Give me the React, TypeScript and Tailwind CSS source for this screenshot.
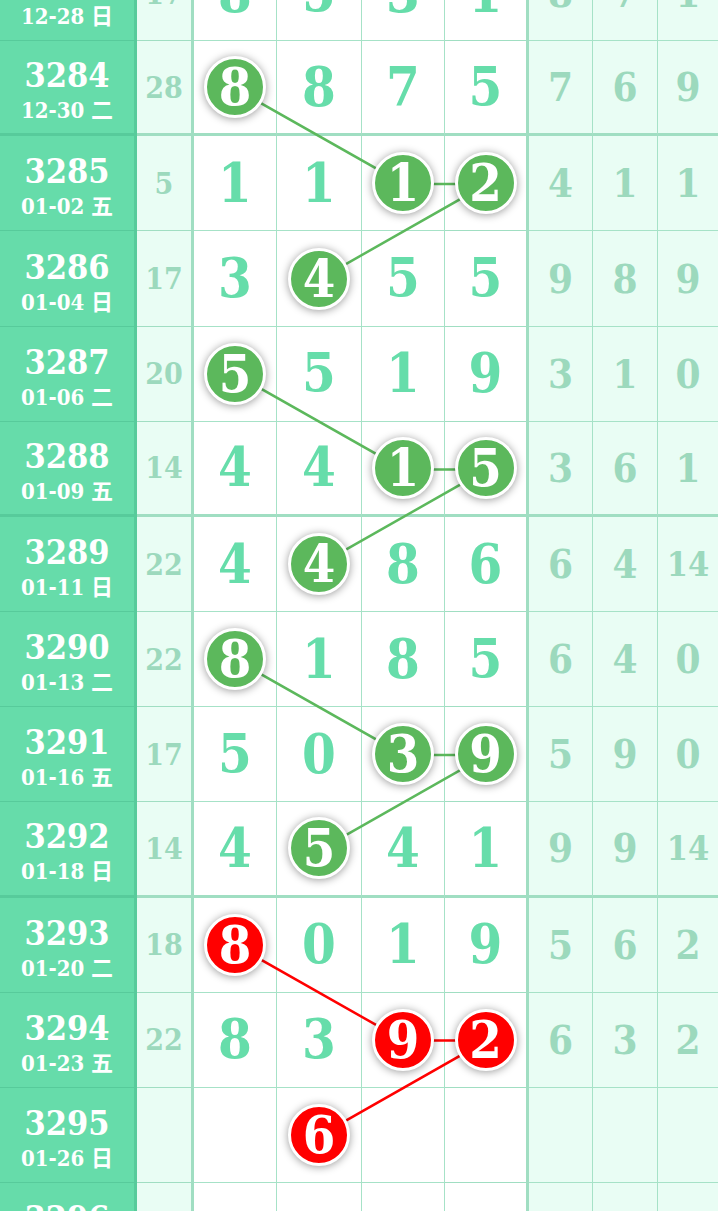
type Row = {
  issue: string;
  date: string;
  sum: string;
  nums: string[];
  extra: string[];
  hits: number[];
  red?: boolean;
  groupEnd?: boolean;
};

const rows: Row[] = [
  { issue: '3283', date: '12-28 日', sum: '17', nums: ['8', '5', '3', '1'], extra: ['8', '7', '1'], hits: [] },
  { issue: '3284', date: '12-30 二', sum: '28', nums: ['8', '8', '7', '5'], extra: ['7', '6', '9'], hits: [0], groupEnd: true },
  { issue: '3285', date: '01-02 五', sum: '5', nums: ['1', '1', '1', '2'], extra: ['4', '1', '1'], hits: [2, 3] },
  { issue: '3286', date: '01-04 日', sum: '17', nums: ['3', '4', '5', '5'], extra: ['9', '8', '9'], hits: [1] },
  { issue: '3287', date: '01-06 二', sum: '20', nums: ['5', '5', '1', '9'], extra: ['3', '1', '0'], hits: [0] },
  { issue: '3288', date: '01-09 五', sum: '14', nums: ['4', '4', '1', '5'], extra: ['3', '6', '1'], hits: [2, 3], groupEnd: true },
  { issue: '3289', date: '01-11 日', sum: '22', nums: ['4', '4', '8', '6'], extra: ['6', '4', '14'], hits: [1] },
  { issue: '3290', date: '01-13 二', sum: '22', nums: ['8', '1', '8', '5'], extra: ['6', '4', '0'], hits: [0] },
  { issue: '3291', date: '01-16 五', sum: '17', nums: ['5', '0', '3', '9'], extra: ['5', '9', '0'], hits: [2, 3] },
  { issue: '3292', date: '01-18 日', sum: '14', nums: ['4', '5', '4', '1'], extra: ['9', '9', '14'], hits: [1], groupEnd: true },
  { issue: '3293', date: '01-20 二', sum: '18', nums: ['8', '0', '1', '9'], extra: ['5', '6', '2'], hits: [0], red: true },
  { issue: '3294', date: '01-23 五', sum: '22', nums: ['8', '3', '9', '2'], extra: ['6', '3', '2'], hits: [2, 3], red: true },
  { issue: '3295', date: '01-26 日', sum: '', nums: ['', '6', '', ''], extra: ['', '', ''], hits: [1], red: true },
  { issue: '3296', date: '01-28 二', sum: '', nums: ['', '', '', ''], extra: ['', '', ''], hits: [] },
];

const RH = 95.17;
const colX = [235.5, 319.5, 403.5, 487];

// trend lines: [row, col] points
const paths: { pts: [number, number][]; color: string }[] = [
  { pts: [[1, 0], [2, 2], [2, 3], [3, 1]], color: '#5cb85c' },
  { pts: [[4, 0], [5, 2], [5, 3], [6, 1]], color: '#5cb85c' },
  { pts: [[7, 0], [8, 2], [8, 3], [9, 1]], color: '#5cb85c' },
  { pts: [[10, 0], [11, 2], [11, 3], [12, 1]], color: '#ff0000' },
];

const serif = "font-['DejaVu_Serif','Noto_Sans_CJK_SC',serif] font-stretch-condensed";

function Ball({ n, red }: { n: string; red?: boolean }) {
  return (
    <span
      className={`relative z-10 flex h-[62px] w-[62px] items-center justify-center rounded-full border-[3px] border-white text-[52px] font-bold leading-none text-white shadow-[0_1px_8px_rgba(0,0,0,0.4)] ${
        red ? 'bg-[#ff0000]' : 'bg-[#5cb85c]'
      }`}
    >
      {n}
    </span>
  );
}

export default function App() {
  return (
    <div className={`h-[1211px] w-[718px] overflow-hidden bg-white ${serif}`}>
      <div className="relative -mt-[54px] w-[718px]">
        {rows.map((r) => {
          const bottom = r.groupEnd ? 'border-b-[3px]' : 'border-b';
          return (
            <div key={r.issue} className="grid h-[95.17px] grid-cols-[137px_57px_83px_85px_83px_84px_64px_65px_60px]">
              <div
                className={`flex flex-col items-center justify-center border-r-[3px] border-[#57cb9b] bg-[#66dcaa] pt-1 font-bold text-white ${bottom}`}
              >
                <span className="text-[34px] leading-[40px]">{r.issue}</span>
                <span className="mt-[2px] text-[22px] leading-[26px]">{r.date}</span>
              </div>
              <div
                className={`flex items-center justify-center border-r-[3px] border-[#a0dec2] bg-[#e9fdf4] text-[30px] font-bold text-[#9cd9bd] ${bottom}`}
              >
                {r.sum}
              </div>
              {r.nums.map((n, i) => (
                <div
                  key={i}
                  className={`flex items-center justify-center text-[54px] font-bold text-[#66ddaa] ${bottom} ${
                    i === 3 ? 'border-r-[3px] border-[#a0dec2]' : 'border-r border-[#a6e2c7]'
                  } ${r.groupEnd && i !== 3 ? 'border-b-[#a0dec2]' : ''}`}
                >
                  {r.hits.includes(i) ? <Ball n={n} red={r.red} /> : n}
                </div>
              ))}
              {r.extra.map((n, i) => (
                <div
                  key={i}
                  className={`flex items-center justify-center bg-[#e9fdf4] font-bold text-[#9cd9bd] ${bottom} ${
                    i < 2 ? 'border-r border-[#a6e2c7]' : 'border-[#a6e2c7]'
                  } ${r.groupEnd ? 'border-b-[#a0dec2]' : ''} ${n.length > 1 ? 'text-[34px]' : 'text-[40px]'}`}
                >
                  {n}
                </div>
              ))}
            </div>
          );
        })}
        <svg className="pointer-events-none absolute inset-0 z-[5] h-full w-full">
          {paths.map((p, k) => (
            <polyline
              key={k}
              fill="none"
              stroke={p.color}
              strokeWidth={2.5}
              points={p.pts.map(([r, c]) => `${colX[c]},${r * RH + RH / 2}`).join(' ')}
            />
          ))}
        </svg>
      </div>
    </div>
  );
}
